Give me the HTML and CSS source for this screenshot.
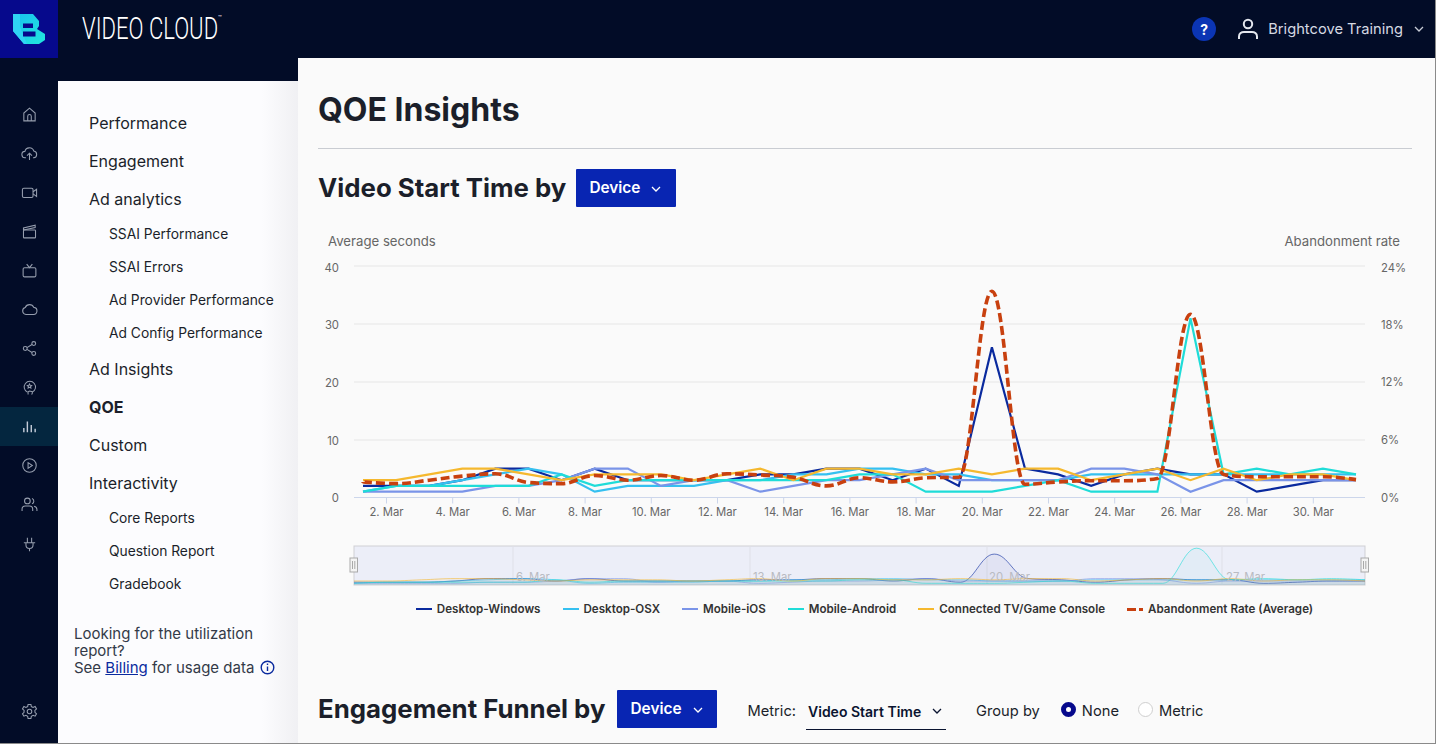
FILE: index.html
```html
<!DOCTYPE html>
<html lang="en">
<head>
  <meta charset="UTF-8">
  <title>QOE Insights</title>
  <link rel="stylesheet" href="styles.css">
</head>
<body>
<div class="app">
  <header class="topbar">
    <div class="logo-box">
      <svg width="34" height="32" viewBox="0 0 34 32">
        <defs>
          <linearGradient id="bgrad" x1="0" y1="0" x2="1" y2="1">
            <stop offset="0" stop-color="#18c0ee"/>
            <stop offset="1" stop-color="#22e6de"/>
          </linearGradient>
        </defs>
        <path fill="url(#bgrad)" d="M1 1H21L27 8V13L25 16L33 21V27L27 31H12L1 18Z"/>
        <path fill="#2fd4f4" d="M1 1H8V14L15 31H12L1 18Z"/>
        <path fill="#06098c" d="M11 10.500H21V15H11ZM11 18.500H23.500V23.500H11Z"/>
      </svg>
    </div>
    <div class="brand"><span class="brand-name">VIDEO CLOUD</span><span class="brand-tm">™</span></div>
    <div class="top-right">
      <span class="help">?</span>
      <svg class="user-icon" width="24" height="24" viewBox="0 0 24 24" fill="none" stroke="#e4e7ee" stroke-width="2">
        <circle cx="12" cy="7" r="4.200"/>
        <path d="M3 22v-2.500c0-3 2.500-4.500 5-4.500h8c2.500 0 5 1.500 5 4.500V22"/>
      </svg>
      <span class="user-name">Brightcove Training</span>
      <svg class="chev" width="10" height="6" viewBox="0 0 10 6" fill="none" stroke="#c8ccd6" stroke-width="1.300"><path d="M1 1l4 4 4-4"/></svg>
    </div>
  </header>

  <nav class="rail">
    <a class="rail-item"><svg viewBox="0 0 24 24"><path d="M4 21V10l8-7 8 7v11zM9.500 21v-6.500a2.500 2.500 0 0 1 5 0V21"/></svg></a>
    <a class="rail-item"><svg viewBox="0 0 24 24"><path d="M7 18H6a4.500 4.500 0 0 1-.5-9A6.500 6.500 0 0 1 18 8.500a4.800 4.800 0 0 1 0 9.500h-1M12 21v-9M8.500 15l3.500-3.500 3.500 3.500"/></svg></a>
    <a class="rail-item"><svg viewBox="0 0 24 24"><rect x="2" y="6" width="15" height="13" rx="2"/><path d="M17 11l5-3.500v10L17 14"/></svg></a>
    <a class="rail-item"><svg viewBox="0 0 24 24"><rect x="3.500" y="10" width="17" height="11" rx="1"/><path d="M3.500 10V7L20 3v3.500L3.500 10"/></svg></a>
    <a class="rail-item"><svg viewBox="0 0 24 24"><rect x="3" y="8" width="18" height="13" rx="2"/><path d="M8 3l4 5 4-5"/></svg></a>
    <a class="rail-item"><svg viewBox="0 0 24 24"><path d="M7 19a5 5 0 0 1-1-9.800A6.500 6.500 0 0 1 18 9a5 5 0 0 1-1 10z"/></svg></a>
    <a class="rail-item"><svg viewBox="0 0 24 24"><circle cx="18" cy="5" r="2.700"/><circle cx="6" cy="12" r="2.700"/><circle cx="18" cy="19" r="2.700"/><path d="M8.500 10.700l7-4.300M8.500 13.300l7 4.300"/></svg></a>
    <a class="rail-item"><svg viewBox="0 0 24 24"><path d="M9 18.500a8 8 0 1 1 7 0M10 22v-4l2-1 4 1v2l-1 2M12 7l1 2 2 .3-1.500 1.500.4 2-1.900-1-1.900 1 .4-2L9 9.300l2-.3z"/></svg></a>
    <a class="rail-item is-active"><svg viewBox="0 0 24 24"><path class="bright" d="M4 20v-6M9 20V5M14.500 20V10M20 20v-5"/></svg></a>
    <a class="rail-item"><svg viewBox="0 0 24 24"><circle cx="12" cy="12" r="9.500"/><path d="M10 8l6 4-6 4z"/></svg></a>
    <a class="rail-item"><svg viewBox="0 0 24 24"><circle cx="9" cy="7" r="4"/><path d="M1.500 21v-2.500c0-3 2.500-4.500 4.500-4.500h6c2 0 4.500 1.500 4.500 4.500V21M15.500 3.500a4 4 0 0 1 0 7.500M18.500 14.500c2 .5 4 2 4 4.500v2"/></svg></a>
    <a class="rail-item"><svg viewBox="0 0 24 24"><path d="M4 11h16M7 11v3a5 5 0 0 0 10 0v-3M9 11V4M15 11V4M12 19v4"/></svg></a>
    <a class="rail-item rail-bottom"><svg viewBox="0 0 24 24"><circle cx="12" cy="12" r="3.200"/><path d="M10 2h4l.6 3 2.500 1.200 2.800-1.200 2 3.400-2.300 2 .1 2.800 2.200 2-2 3.400-2.800-1.200-2.500 1.400L14 22h-4l-.6-3.200-2.500-1.400-2.800 1.200-2-3.400 2.200-2 .1-2.800-2.300-2 2-3.400 2.800 1.200L9.400 5z"/></svg></a>
  </nav>

  <aside class="side">
    <ul class="side-list">
      <li>Performance</li>
      <li>Engagement</li>
      <li>Ad analytics</li>
      <li class="sub">SSAI Performance</li>
      <li class="sub">SSAI Errors</li>
      <li class="sub">Ad Provider Performance</li>
      <li class="sub">Ad Config Performance</li>
      <li>Ad Insights</li>
      <li class="current">QOE</li>
      <li>Custom</li>
      <li>Interactivity</li>
      <li class="sub">Core Reports</li>
      <li class="sub">Question Report</li>
      <li class="sub">Gradebook</li>
    </ul>
    <p class="side-note">Looking for the utilization<br>report?<br>See <a class="link">Billing</a> for usage data
      <svg class="info" width="15" height="15" viewBox="0 0 15 15" fill="none" stroke="#0a2a9e" stroke-width="1.400"><circle cx="7.500" cy="7.500" r="6.300"/><path d="M7.500 6.500v4.500M7.500 3.600v1.400"/></svg>
    </p>
  </aside>

  <main class="main">
    <h1 class="page-title">QOE Insights</h1>

    <div class="title-row">
      <h2 class="section-title">Video Start Time by</h2>
      <button class="drop-btn">Device
        <svg width="10" height="6" viewBox="0 0 10 6" fill="none" stroke="#fff" stroke-width="1.300"><path d="M1 1l4 4 4-4"/></svg>
      </button>
    </div>

    <svg class="chart" id="chart" width="1094" height="371" viewBox="318 225 1094 371">
      <text class="axis-title" x="328" y="246">Average seconds</text>
      <text class="axis-title" x="1400" y="246" text-anchor="end">Abandonment rate</text>

      <g class="grid">
        <path d="M354 266H1365M354 324H1365M354 382H1365M354 440H1365"/>
      </g>
      <path class="axis" d="M354 497.500H1365M386.500 497.500v6M452.700 497.500v6M518.900 497.500v6M585.100 497.500v6M651.300 497.500v6M717.500 497.500v6M783.700 497.500v6M849.900 497.500v6M916.100 497.500v6M982.300 497.500v6M1048.500 497.500v6M1114.700 497.500v6M1180.900 497.500v6M1247.100 497.500v6M1313.300 497.500v6"/>

      <g class="tick" text-anchor="end">
        <text x="339" y="272">40</text>
        <text x="339" y="329">30</text>
        <text x="339" y="387">20</text>
        <text x="339" y="445">10</text>
        <text x="339" y="502">0</text>
      </g>
      <g class="tick">
        <text x="1381" y="272">24%</text>
        <text x="1381" y="329">18%</text>
        <text x="1381" y="386">12%</text>
        <text x="1381" y="444">6%</text>
        <text x="1381" y="502">0%</text>
      </g>
      <g class="tick" text-anchor="middle">
        <text x="386.500" y="516">2. Mar</text>
        <text x="452.700" y="516">4. Mar</text>
        <text x="518.900" y="516">6. Mar</text>
        <text x="585.100" y="516">8. Mar</text>
        <text x="651.300" y="516">10. Mar</text>
        <text x="717.500" y="516">12. Mar</text>
        <text x="783.700" y="516">14. Mar</text>
        <text x="849.900" y="516">16. Mar</text>
        <text x="916.100" y="516">18. Mar</text>
        <text x="982.300" y="516">20. Mar</text>
        <text x="1048.500" y="516">22. Mar</text>
        <text x="1114.700" y="516">24. Mar</text>
        <text x="1180.900" y="516">26. Mar</text>
        <text x="1247.100" y="516">28. Mar</text>
        <text x="1313.300" y="516">30. Mar</text>
      </g>

      <g id="lines"></g>

      <rect class="nav-bg" x="354" y="546" width="1011" height="39"/>
      <path class="nav-grid" d="M513 546v39M750 546v39M987 546v39M1222 546v39"/>
      <g id="navLines"></g>
      <g class="nav-label">
        <text x="516" y="581">6. Mar</text>
        <text x="753" y="581">13. Mar</text>
        <text x="989" y="581">20. Mar</text>
        <text x="1226" y="581">27. Mar</text>
      </g>
      <g class="nav-handle">
        <rect x="350" y="558" width="7.500" height="14"/>
        <path d="M352.500 561v8M354.800 561v8"/>
        <rect x="1361" y="558" width="7.500" height="14"/>
        <path d="M1363.500 561v8M1365.800 561v8"/>
      </g>
    </svg>

    <ul class="legend">
      <li><i class="swatch c-win"></i>Desktop-Windows</li>
      <li><i class="swatch c-osx"></i>Desktop-OSX</li>
      <li><i class="swatch c-ios"></i>Mobile-iOS</li>
      <li><i class="swatch c-and"></i>Mobile-Android</li>
      <li><i class="swatch c-tv"></i>Connected TV/Game Console</li>
      <li><i class="swatch-dash"><b></b><b></b></i>Abandonment Rate (Average)</li>
    </ul>

    <div class="title-row funnel-row">
      <h2 class="section-title">Engagement Funnel by</h2>
      <button class="drop-btn funnel-btn">Device
        <svg width="10" height="6" viewBox="0 0 10 6" fill="none" stroke="#fff" stroke-width="1.300"><path d="M1 1l4 4 4-4"/></svg>
      </button>
      <span class="field-label metric-label">Metric:</span>
      <span class="metric-select">Video Start Time
        <svg width="10" height="6" viewBox="0 0 10 6" fill="none" stroke="#0a1430" stroke-width="1.300"><path d="M1 1l4 4 4-4"/></svg>
      </span>
      <span class="field-label group-label">Group by</span>
      <span class="radio is-on"></span><span class="field-label">None</span>
      <span class="radio"></span><span class="field-label">Metric</span>
    </div>
  </main>
</div>
<script src="chart.js"></script>
</body>
</html>
```

FILE: styles.css
```css
* { box-sizing: border-box; }
html, body { margin: 0; height: 100%; overflow: hidden; }
body { font-family: "Inter", "Liberation Sans", sans-serif; color: #1b1f2a; background: #fafafa; }

.app {
  display: grid;
  grid-template-columns: 58px 240px 1fr;
  grid-template-rows: 58px 1fr;
  width: 1436px;
  height: 744px;
  background: #020c27;
  border-right: 1px solid #8a8a8a;
  border-bottom: 1px solid #8a8a8a;
}

/* top bar */
.topbar { grid-column: 1 / 4; display: flex; align-items: center; background: #020c27; }
.logo-box { width: 58px; height: 58px; background: #06098c; display: flex; align-items: center; justify-content: center; padding: 0 0 1px 0; }
.brand { margin-left: 24px; margin-top: -3px; color: #fff; white-space: nowrap; display: flex; align-items: flex-start; }
.brand-name { font-family: "Roboto", sans-serif; font-weight: 300; font-size: 32px; line-height: 36px; display: block; width: 136px; transform: scaleX(0.69); transform-origin: left center; }
.brand-tm { font-size: 6px; line-height: 8px; margin-top: 4px; }
.top-right { margin-left: auto; display: flex; align-items: center; padding-right: 11px; }
.help { width: 24px; height: 24px; border-radius: 50%; background: #0b35b4; color: #fff; font-size: 14px; font-weight: 700; display: flex; align-items: center; justify-content: center; }
.user-icon { margin-left: 20px; }
.user-name { margin-left: 8px; font-size: 14.700px; color: #d5d9e2; }
.chev { margin-left: 11px; }

/* icon rail */
.rail { background: #020c27; display: flex; flex-direction: column; padding: 37px 0 12px; }
.rail-item { height: 39px; flex: none; display: flex; align-items: center; justify-content: center; padding-left: 1px; }
.rail-item svg { width: 17px; height: 17px; fill: none; stroke: #969eae; stroke-width: 1.500; }
.rail-item .bright { stroke: #c3cbd8; stroke-width: 2; }
.rail-item.is-active { background: #04263f; }
.rail-bottom { margin-top: auto; }

/* second level menu */
.side {
  margin-top: 23px;
  padding: 23px 0 67px 16px;
  background: linear-gradient(to right, #fcfcfe 85%, #f0f0f3);
  display: flex;
  flex-direction: column;
}
.side-list { list-style: none; margin: 0; padding: 0 0 0 15px; font-size: 16px; line-height: 38px; }
.side-list .sub { padding-left: 20px; font-size: 13.800px; line-height: 33px; }
.side-list .current { font-weight: 700; }
.side-note { margin: auto 0 0; font-size: 15px; line-height: 17px; color: #333a48; white-space: nowrap; }
.link { color: #0a2a9e; text-decoration: underline; }
.info { vertical-align: -2px; margin-left: 1px; }

/* main column */
.main { background: #fafafa; padding: 31px 23px 0 20px; overflow: hidden; }
.page-title { margin: 0; padding-bottom: 17px; border-bottom: 1px solid #c9ccd2; font-size: 32px; line-height: 42px; font-weight: 700; }
.title-row { display: flex; align-items: center; margin-top: 20px; height: 38px; }
.section-title { margin: 0; font-size: 25.800px; line-height: 38px; font-weight: 700; white-space: nowrap; }
.drop-btn { margin-left: 10px; padding: 0 0 2px 13px; width: 100px; height: 38px; border: 0; border-radius: 1px; background: #0825b2; color: #fff; font: 600 15.400px "Inter", sans-serif; display: flex; align-items: center; gap: 11px; }
.drop-btn svg { margin-top: 3px; }
.funnel-btn { margin-left: 12px; }

/* chart */
.chart { display: block; margin-top: 18px; }
.axis-title { font-size: 13.200px; fill: #666; }
.tick text { font-size: 11.300px; fill: #666; }
.grid path { stroke: #e6e6e6; fill: none; }
.axis { stroke: #ccd6eb; fill: none; }
.nav-bg { fill: #eceef8; stroke: #cfcfd4; }
.nav-grid { stroke: #dfe0e8; fill: none; }
.nav-label text { font-size: 11.300px; fill: #b9bbc2; }
.nav-handle rect { fill: #f4f4f4; stroke: #a9a9a9; }
.nav-handle path { stroke: #a9a9a9; fill: none; }

.legend { list-style: none; margin: 1px 0 0; padding: 0 1px 0 0; display: flex; justify-content: center; gap: 22px; height: 24px; align-items: center; font-size: 11.600px; font-weight: 600; color: #333; white-space: nowrap; }
.legend li { display: flex; align-items: center; gap: 5px; }
.swatch { width: 16px; height: 2px; }
.swatch-dash { width: 16px; display: flex; gap: 3px; }
.swatch-dash b { height: 3px; background: #c8400f; width: 9px; }
.swatch-dash b + b { width: 4px; }
.c-win { background: #0a2a9e; }
.c-osx { background: #35c0f0; }
.c-ios { background: #7a94e8; }
.c-and { background: #1fdcd8; }
.c-tv { background: #f5b82e; }

/* funnel row */
.funnel-row { margin-top: 69px; }
.field-label { font-size: 14.700px; color: #1b1f2a; margin-top: 4px; white-space: nowrap; }
.metric-label { margin-left: 30px; }
.metric-select { margin-left: 10px; align-self: flex-start; width: 140px; height: 40px; border-bottom: 1px solid #0a1430; font-size: 14px; font-weight: 600; color: #0a1430; display: flex; align-items: center; gap: 11px; padding: 3px 0 0 2px; white-space: nowrap; }
.group-label { margin-left: 30px; }
.radio { width: 15px; height: 15px; border-radius: 50%; border: 1px solid #cfcfcf; background: #fff; margin: 0 6px 0 19px; }
.radio.is-on { border: 5px solid #06098c; margin-left: 21px; }
```

FILE: chart.js
```js
const win = [2,2,2,3,5,5,3,5,3,3,3,3,4,4,5,5,3,5,2,26,5,4,2,4,5,4,4,1,2,3,3];
const osx = [1,2,2,3,4,5,4,1,2,2,2,3,3,4,4,5,5,4,4,3,3,3,4,4,4,4,4,4,4,4,4];
const ios = [1,1,1,1,2,2,3,5,5,2,3,3,1,2,3,3,4,5,3,3,3,3,5,5,4,1,3,3,3,3,3];
const android = [1,2,2,2,2,2,4,2,3,3,3,3,3,3,3,4,4,1,1,1,2,3,1,1,1,31,4,5,4,5,4];
const tv = [3,3,4,5,5,4,3,4,4,4,3,4,5,3,5,5,4,4,5,4,5,5,3,4,5,3,5,3,4,4,3];
const rate = [2.7,2.4,3,3.7,4.1,2.6,2.4,3.8,3,3.8,3,4.1,3.9,3.5,2,3.4,2.7,3.4,3.5,35.7,2.3,2.7,2.9,2.9,3.3,31.7,4,3.6,3.6,3.6,3.1];

const series = [
  { data: win, color: "#0a2a9e" },
  { data: osx, color: "#35c0f0" },
  { data: ios, color: "#7a94e8" },
  { data: android, color: "#1fdcd8" },
  { data: tv, color: "#f5b82e" }
];

const NS = "http://www.w3.org/2000/svg";

function add(parent, attrs) {
  const el = document.createElementNS(NS, "path");
  Object.keys(attrs).forEach(k => el.setAttribute(k, attrs[k]));
  parent.appendChild(el);
}

function linePath(pts) {
  return "M" + pts.map(p => p[0].toFixed(1) + " " + p[1].toFixed(1)).join("L");
}

// same smoothing as a charting library spline: control points on a slope, flat at peaks
function splinePath(pts) {
  let d = "M" + pts[0][0] + " " + pts[0][1];
  const ctrl = pts.map((p, i) => {
    const prev = pts[i - 1], next = pts[i + 1];
    if (!prev || !next) return [p, p];
    const lx = (1.5 * p[0] + prev[0]) / 2.5, ly = (1.5 * p[1] + prev[1]) / 2.5;
    const rx = (1.5 * p[0] + next[0]) / 2.5, ry = (1.5 * p[1] + next[1]) / 2.5;
    let cl = [lx, ly], cr = [rx, ry];
    if (rx !== lx) {
      const c = ((ry - ly) * (rx - p[0])) / (rx - lx) + p[1] - ry;
      cl = [lx, ly + c];
      cr = [rx, ry + c];
    }
    if (cl[1] > Math.max(prev[1], p[1])) { cl[1] = Math.max(prev[1], p[1]); cr[1] = 2 * p[1] - cl[1]; }
    else if (cl[1] < Math.min(prev[1], p[1])) { cl[1] = Math.min(prev[1], p[1]); cr[1] = 2 * p[1] - cl[1]; }
    if (cr[1] > Math.max(next[1], p[1])) { cr[1] = Math.max(next[1], p[1]); cl[1] = 2 * p[1] - cr[1]; }
    else if (cr[1] < Math.min(next[1], p[1])) { cr[1] = Math.min(next[1], p[1]); cl[1] = 2 * p[1] - cr[1]; }
    return [cl, cr];
  });
  for (let i = 1; i < pts.length; i++) {
    const a = ctrl[i - 1][1], b = ctrl[i][0], p = pts[i];
    d += "C" + a[0].toFixed(1) + " " + a[1].toFixed(1) + " " + b[0].toFixed(1) + " " + b[1].toFixed(1) + " " + p[0].toFixed(1) + " " + p[1].toFixed(1);
  }
  return d;
}

const lines = document.getElementById("lines");
const navLines = document.getElementById("navLines");

series.forEach(s => {
  const pts = s.data.map((v, i) => [363 + 33.1 * i, 497.5 - 5.78 * v]);
  add(lines, { d: linePath(pts), fill: "none", stroke: s.color, "stroke-width": 2.2 });

  const nav = s.data.map((v, i) => [354 + 33.7 * i, 584.5 - 1.17 * v]);
  const curve = splinePath(nav);
  add(navLines, { d: curve + "L1365 585L354 585Z", fill: s.color, "fill-opacity": 0.05 });
  add(navLines, { d: curve, fill: "none", stroke: s.color, "stroke-width": 1, "stroke-opacity": 0.6 });
});

add(lines, {
  d: splinePath(rate.map((v, i) => [363 + 33.1 * i, 497.5 - 5.78 * v])),
  fill: "none",
  stroke: "#c8400f",
  "stroke-width": 3.6,
  "stroke-dasharray": "9 4"
});
```
